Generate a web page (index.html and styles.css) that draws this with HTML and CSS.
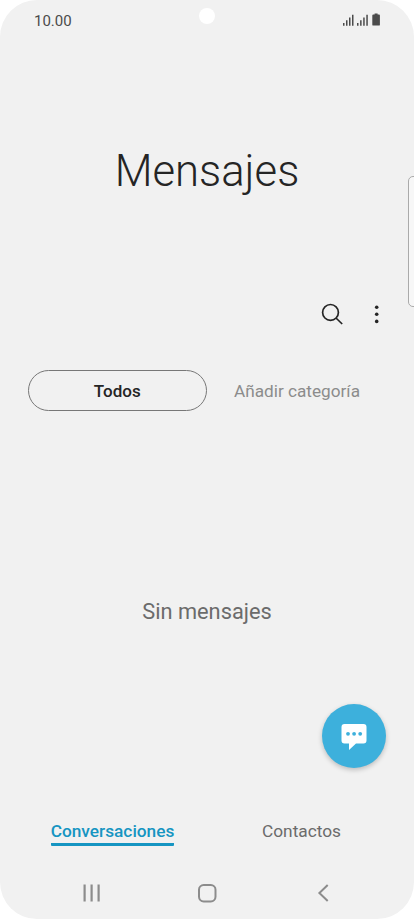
FILE: index.html
```html
<!DOCTYPE html>
<html lang="es">
<head>
<meta charset="utf-8">
<title>Mensajes</title>
<link rel="stylesheet" href="styles.css">
</head>
<body>
<div class="phone">
  <header class="status">
    <span class="time">10.00</span>
    <span class="camera"></span>
    <svg class="indicators" width="40" height="14" viewBox="0 0 40 14" fill="#4b4b4b">
      <path d="M1 10h1.500v2.700H1zM4 7.300h1.500v5.400H4zM7 4.500h1.500v8.200H7zM10 1.700h1.500v11H10z"/>
      <path d="M15 10h1.500v2.700H15zM18.100 7.300h1.500v5.400h-1.500zM21.200 4.500h1.500v8.200h-1.500zM24.300 1.700h1.500v11h-1.500z"/>
      <path d="M32.600 .6h3v1h1.400q.9 0 .9.900v9.200q0 .9-.9.900h-5.800q-.9 0-.9-.9V2.500q0-.9.9-.9h1.400z"/>
    </svg>
  </header>
  <h1 class="title">Mensajes</h1>
  <div class="toolbar">
    <svg width="24" height="24" viewBox="0 0 24 24" fill="none" stroke="#252525" stroke-width="1.700">
      <circle cx="10.500" cy="10.400" r="7.900"/><path d="M16 16l6.200 6"/>
    </svg>
    <svg width="6" height="24" viewBox="0 0 6 24" fill="#252525">
      <circle cx="2.700" cy="5.200" r="1.800"/><circle cx="2.700" cy="12.300" r="1.800"/><circle cx="2.700" cy="19.400" r="1.800"/>
    </svg>
  </div>
  <div class="categories">
    <div class="chip selected"><span>Todos</span></div>
    <div class="chip"><span>Añadir categoría</span></div>
  </div>
  <main class="empty"><span>Sin mensajes</span></main>
  <nav class="tabs">
    <div class="tab active"><span>Conversaciones</span></div>
    <div class="tab"><span>Contactos</span></div>
  </nav>
  <footer class="keys">
    <svg width="20" height="20" viewBox="0 0 20 20" stroke="#8c8c8c" stroke-width="2.200"><path d="M3.600 1.500v17M10.600 1.500v17M17.600 1.500v17"/></svg>
    <svg width="20" height="20" viewBox="0 0 20 20" fill="none" stroke="#8c8c8c" stroke-width="2"><rect x="2" y="2" width="16.500" height="16.500" rx="4.700"/></svg>
    <svg width="20" height="20" viewBox="0 0 20 20" fill="none" stroke="#8c8c8c" stroke-width="2"><path d="M14.700 2L6.400 10l8.300 8"/></svg>
  </footer>
  <div class="edge-panel"></div>
  <div class="compose">
    <svg width="28" height="28" viewBox="0 0 28 28">
      <path fill="#fff" d="M4.500 2h19q3 0 3 3v13.500q0 3-3 3h-7.500L9 28v-6.500H4.500q-3 0-3-3V5q0-3 3-3z"/>
      <g fill="#3db0dc"><circle cx="8" cy="11.800" r="1.900"/><circle cx="14.100" cy="11.800" r="1.900"/><circle cx="20.200" cy="11.800" r="1.900"/></g>
    </svg>
  </div>
</div>
</body>
</html>
```
FILE: styles.css
```css
* { box-sizing: border-box; }

body {
  margin: 0;
  background: #fff;
  font-family: Roboto, "Liberation Sans", sans-serif;
}

.phone {
  position: relative;
  display: flex;
  flex-direction: column;
  width: 414px;
  height: 919px;
  border-radius: 37px;
  background: #f1f1f1;
  overflow: hidden;
}

.status {
  display: grid;
  grid-template-columns: 1fr 16px 1fr;
  align-items: center;
  height: 40px;
  padding: 0 32px 0 34px;
}

.time {
  padding-top: 1px;
  font-size: 15px;
  color: #4b4b4b;
}

.camera {
  width: 16px;
  height: 16px;
  margin: -8px 0 0 -1px;
  border-radius: 50%;
  background: #fff;
}

.indicators { justify-self: end; }

.title {
  display: flex;
  align-items: center;
  justify-content: center;
  height: 262px;
  margin: 0;
  font-size: 43.7px;
  font-weight: 300;
  color: #252525;
}

.toolbar {
  display: flex;
  justify-content: flex-end;
  gap: 30px;
  height: 68px;
  padding-right: 34px;
}

.categories {
  display: grid;
  grid-template-columns: 180px 180px;
  height: 41px;
  padding-left: 27px;
}

.chip {
  display: flex;
  align-items: center;
  justify-content: center;
  font-size: 17.2px;
  color: #8c8c8c;
}

.selected {
  margin-left: 0.5px;
  border: 1px solid #777;
  border-radius: 21px;
  font-size: 17px;
  font-weight: 500;
  color: #252525;
}

.empty {
  display: flex;
  flex: 1;
  align-items: center;
  justify-content: center;
  padding-bottom: 6px;
  font-size: 21.8px;
  color: #6b6b6b;
}

.tabs {
  display: grid;
  grid-template-columns: 189px 189px;
  justify-content: center;
  height: 56px;
  font-size: 17.3px;
  color: #6b6b6b;
}

.tab { text-align: center; }

.tab span {
  display: inline-block;
  height: 28px;
  line-height: 26px;
}

.active span {
  border-bottom: 3px solid #1695c2;
  border-radius: 1px;
  font-weight: 500;
  color: #1695c2;
}

.keys {
  display: flex;
  justify-content: space-between;
  height: 45px;
  padding: 9px 81px 0;
}

.edge-panel {
  position: absolute;
  top: 176px;
  right: -6px;
  width: 12px;
  height: 131px;
  border: 1px solid #aaa;
  border-radius: 5px;
  background: #f7f7f7;
}

.compose {
  position: absolute;
  top: 704px;
  left: 322px;
  display: flex;
  align-items: center;
  justify-content: center;
  width: 64px;
  height: 64px;
  border-radius: 50%;
  background: #3db0dc;
  box-shadow: 0 2px 5px rgba(0, 0, 0, 0.22);
}
```
